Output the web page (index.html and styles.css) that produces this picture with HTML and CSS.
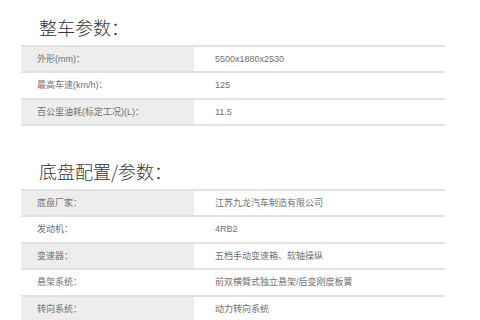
FILE: index.html
```html
<!DOCTYPE html>
<html lang="zh-CN">
<head>
<meta charset="utf-8">
<title>参数</title>
<link rel="stylesheet" href="styles.css">
</head>
<body>
<div class="page">
  <h2 class="title">整车参数：</h2>
  <div class="spec">
    <div class="row"><div class="label">外形(mm)：</div><div class="value">5500x1880x2530</div></div>
    <div class="row"><div class="label">最高车速(km/h)：</div><div class="value">125</div></div>
    <div class="row"><div class="label">百公里油耗(标定工况)(L)：</div><div class="value">11.5</div></div>
  </div>
  <h2 class="title second">底盘配置/参数：</h2>
  <div class="spec">
    <div class="row"><div class="label">底盘厂家：</div><div class="value">江苏九龙汽车制造有限公司</div></div>
    <div class="row"><div class="label">发动机：</div><div class="value">4RB2</div></div>
    <div class="row"><div class="label">变速器：</div><div class="value">五档手动变速箱、软轴操纵</div></div>
    <div class="row"><div class="label">悬架系统：</div><div class="value">前双横臂式独立悬架/后变刚度板簧</div></div>
    <div class="row"><div class="label">转向系统：</div><div class="value">动力转向系统</div></div>
  </div>
</div>
</body>
</html>
```
FILE: styles.css
```css
html, body {
  margin: 0;
  padding: 0;
  background: #ffffff;
}
body {
  font-family: "Liberation Sans", "Noto Sans CJK SC", sans-serif;
  overflow: hidden;
}
.page {
  width: 424px;
  margin-left: 21px;
  padding-top: 17px;
}
.title {
  margin: 0 0 8px 18px;
  height: 20px;
  font-size: 18px;
  line-height: 20px;
  font-weight: 300;
  color: #333333;
  font-family: "Noto Sans CJK SC", sans-serif;
}
.title.second {
  margin-top: 35px;
}
.spec {
  border-bottom: 2px solid #e2e2e2;
}
.row {
  display: flex;
  align-items: stretch;
  box-sizing: border-box;
  height: 26px;
  border-top: 2px solid #e2e2e2;
  font-size: 9px;
  line-height: 24px;
  color: #707070;
}
.row:nth-child(even) {
  height: 27px;
  line-height: 25px;
}
.label {
  flex: 0 0 157px;
  padding-left: 16px;
  background: #ededed;
  white-space: nowrap;
}
.row:nth-child(even) .label {
  background: #ffffff;
}
.value {
  flex: 1 1 auto;
  padding-left: 21px;
  white-space: nowrap;
}
```
